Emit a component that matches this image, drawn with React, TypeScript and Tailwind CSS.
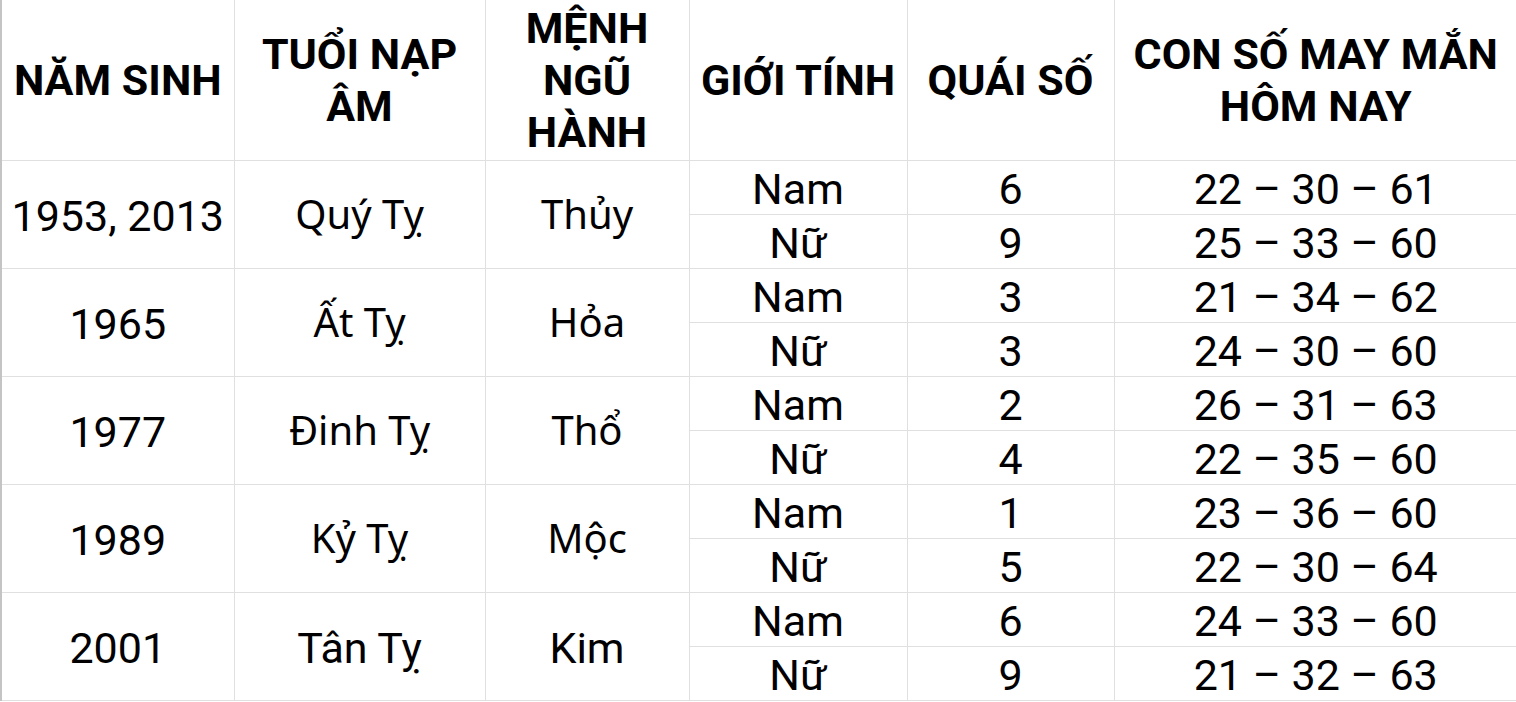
import React from "react";

type Group = {
  year: string;
  tuoi: string;
  menh: string;
  tuoiAlt?: boolean;
  menhAlt?: boolean;
  rows: [string, string, string][];
};

const groups: Group[] = [
  { year: "1953, 2013", tuoi: "Quý Tỵ", menh: "Thủy", tuoiAlt: true, menhAlt: true, rows: [["Nam", "6", "22 – 30 – 61"], ["Nữ", "9", "25 – 33 – 60"]] },
  { year: "1965", tuoi: "Ất Tỵ", menh: "Hỏa", tuoiAlt: true, menhAlt: true, rows: [["Nam", "3", "21 – 34 – 62"], ["Nữ", "3", "24 – 30 – 60"]] },
  { year: "1977", tuoi: "Đinh Tỵ", menh: "Thổ", tuoiAlt: true, menhAlt: true, rows: [["Nam", "2", "26 – 31 – 63"], ["Nữ", "4", "22 – 35 – 60"]] },
  { year: "1989", tuoi: "Kỷ Tỵ", menh: "Mộc", tuoiAlt: true, menhAlt: true, rows: [["Nam", "1", "23 – 36 – 60"], ["Nữ", "5", "22 – 30 – 64"]] },
  { year: "2001", tuoi: "Tân Tỵ", menh: "Kim", rows: [["Nam", "6", "24 – 33 – 60"], ["Nữ", "9", "21 – 32 – 63"]] },
];

const roboto = "font-['Roboto',sans-serif] text-[43px]";
const noto = "font-['Noto_Sans',sans-serif] text-[40px]";

export default function App() {
  const th = `border border-[#e0e0e0] text-center align-middle font-bold text-[43px] leading-[52px] text-black font-['Roboto',sans-serif]`;
  const td = `border border-[#e0e0e0] text-center align-middle text-black p-0`;
  const tdR = `${td} ${roboto} leading-[46px] pt-[4px]`;
  const tdN = `${td} ${noto} leading-[50px]`;
  return (
    <div className="w-[1516px] h-[702px] bg-white overflow-hidden">
      <table className="table-fixed border-collapse w-[1516px] border-l-2 border-l-[#c4c4c4]">
        <colgroup>
          <col className="w-[233px]" />
          <col className="w-[251px]" />
          <col className="w-[204px]" />
          <col className="w-[218px]" />
          <col className="w-[207px]" />
          <col className="w-[403px]" />
        </colgroup>
        <thead>
          <tr className="h-[160px]">
            <th className={`${th} border-t-0 border-l-0`}>NĂM SINH</th>
            <th className={`${th} border-t-0`}>TUỔI NẠP<br />ÂM</th>
            <th className={`${th} border-t-0`}>MỆNH<br />NGŨ<br />HÀNH</th>
            <th className={`${th} border-t-0`}>GIỚI TÍNH</th>
            <th className={`${th} border-t-0`}>QUÁI SỐ</th>
            <th className={`${th} border-t-0 border-r-0`}>CON SỐ MAY MẮN<br />HÔM NAY</th>
          </tr>
        </thead>
        <tbody>
          {groups.map((g) => (
            <React.Fragment key={g.year}>
              <tr className="h-[54px]">
                <td rowSpan={2} className={`${tdR} border-l-0`}>{g.year}</td>
                <td rowSpan={2} className={g.tuoiAlt ? tdN : tdR}>{g.tuoi}</td>
                <td rowSpan={2} className={g.menhAlt ? tdN : tdR}>{g.menh}</td>
                <td className={tdR}>{g.rows[0][0]}</td>
                <td className={tdR}>{g.rows[0][1]}</td>
                <td className={`${tdR} border-r-0`}>{g.rows[0][2]}</td>
              </tr>
              <tr className="h-[54px]">
                <td className={tdR}>{g.rows[1][0]}</td>
                <td className={tdR}>{g.rows[1][1]}</td>
                <td className={`${tdR} border-r-0`}>{g.rows[1][2]}</td>
              </tr>
            </React.Fragment>
          ))}
        </tbody>
      </table>
    </div>
  );
}
